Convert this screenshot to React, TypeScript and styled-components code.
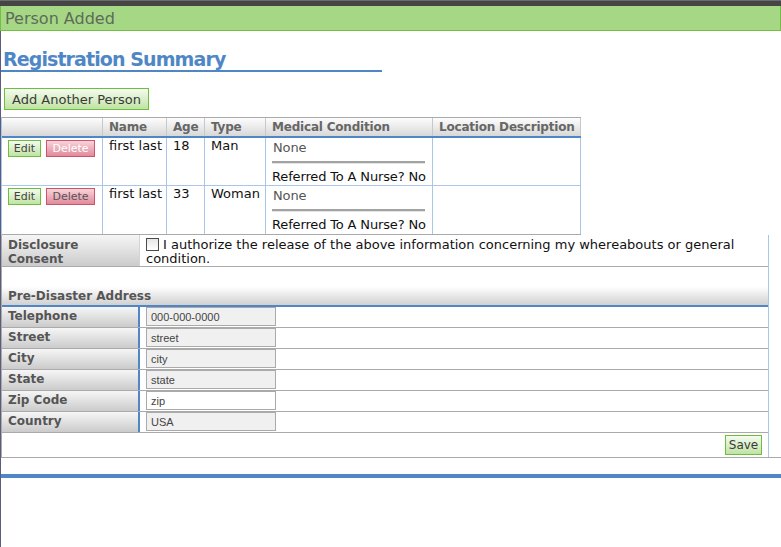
import React from "react";
import styled, { createGlobalStyle, css } from "styled-components";

const GlobalStyle = createGlobalStyle`
  html, body {
    margin: 0;
    padding: 0;
    background: #fff;
    overflow: hidden;
  }
  body {
    font-family: "DejaVu Sans", Verdana, sans-serif;
  }
  * { box-sizing: border-box; }
`;

const blue = "#4f87c6";
const cellBlue = "#a9c5e7";
const gray = "#aaaaaa";

const Page = styled.div`
  display: flex;
  flex-direction: column;
  min-height: 547px;
  width: 100%;
`;

const TopBar = styled.div`
  height: 6px;
  background: linear-gradient(#6b6b6b 0 1px, #454545 1px);
`;

const Banner = styled.div`
  height: 25px;
  padding: 2px 0 0 4px;
  background: #a6d785;
  border: 1px solid #72c043;
  border-top: none;
  color: #5d6b59;
  font-size: 16px;
  line-height: 21px;
`;

const Content = styled.div`
  flex: 1;
  border-left: 1px solid #5c5c7c;
  display: flex;
  flex-direction: column;
  align-items: flex-start;
`;

const Heading = styled.h1`
  margin: 17px 0 0;
  width: 381px;
  padding-left: 2px;
  font-size: 19px;
  letter-spacing: -0.9px;
  line-height: 22px;
  font-weight: bold;
  color: ${blue};
  border-bottom: 2px solid ${blue};
`;

const greenButton = css`
  border: 1px solid #6cbf3c;
  background: linear-gradient(#f5fbf0, #c0e3a2);
  color: #3a3a3a;
  font-family: "DejaVu Sans", Verdana, sans-serif;
  padding: 0;
  cursor: pointer;
`;

const AddButton = styled.button`
  ${greenButton};
  margin: 16px 0 0 3px;
  height: 22px;
  padding: 0 7px;
  font-size: 13px;
`;

const SmallButton = styled.button<{ $kind: "edit" | "delete"; $light?: boolean }>`
  height: 17px;
  font-size: 11px;
  font-family: "DejaVu Sans", Verdana, sans-serif;
  padding: 0;
  ${({ $kind, $light }) =>
    $kind === "edit"
      ? css`
          ${greenButton};
          width: 33px;
          color: #444;
        `
      : css`
          width: 49px;
          margin-left: 5px;
          border: 1px solid #c8566c;
          background: linear-gradient(#f9d3da, #e28a9b);
          color: ${$light ? "#ffffff" : "#555"};
        `}
`;

const PeopleTable = styled.div`
  margin-top: 7px;
  width: 580px;
  border-left: 1px solid ${cellBlue};
`;

const cols = "101px 64px 38px 61px 167px 148px";

const HeadRow = styled.div`
  display: grid;
  grid-template-columns: ${cols};
  border-top: 1px solid ${gray};
  border-bottom: 2px solid ${blue};
`;

const HeadCell = styled.div`
  height: 18px;
  padding: 0 6px;
  border-right: 1px solid #c8c8c8;
  background: linear-gradient(#fdfdfd, #d8d8d8);
  color: #666;
  font-size: 12px;
  letter-spacing: -0.2px;
  font-weight: bold;
  line-height: 19px;
  white-space: nowrap;
`;

const BodyRow = styled.div<{ $last?: boolean }>`
  display: grid;
  grid-template-columns: ${cols};
  height: ${({ $last }) => ($last ? 49 : 48)}px;
  border-bottom: 1px solid ${({ $last }) => ($last ? gray : cellBlue)};
`;

const Cell = styled.div`
  border-right: 1px solid ${cellBlue};
  padding: 0 6px;
  font-size: 13px;
  line-height: 16px;
  color: #111;
  white-space: nowrap;
`;

const ActionCell = styled(Cell)`
  padding: 2px 0 0 6px;
  display: flex;
  align-items: flex-start;
`;

const MedicalCell = styled(Cell)`
  padding: 2px 7px 0 6px;
  letter-spacing: -0.15px;
`;

const Muted = styled.div`
  color: #555;
  padding-left: 1px;
`;

const Rule = styled.hr`
  margin: 5px 0 5px;
  height: 0;
  border: none;
  border-top: 2px solid #a2a2a2;
  border-bottom: 1px solid #e4e4e4;
`;

const FormWrap = styled.div`
  align-self: stretch;
  border-left: 1px solid ${gray};
  border-bottom: 1px solid ${gray};
`;

const Form = styled.div`
  width: 767px;
  border-right: 1px solid ${cellBlue};
`;

const FormRow = styled.div<{ $h: number; $line?: "gray" | "blue" | "none" }>`
  display: grid;
  grid-template-columns: 138px 1fr;
  height: ${({ $h }) => $h}px;
  border-bottom: ${({ $line }) =>
    $line === "blue" ? `2px solid ${blue}` : $line === "none" ? "none" : `1px solid ${gray}`};
`;

const Label = styled.div<{ $accent?: boolean }>`
  padding: ${({ $accent }) => ($accent ? "2px 6px 0" : "3px 6px 0")};
  background: linear-gradient(#f6f6f6, #cbcbcb);
  border-right: ${({ $accent }) => ($accent ? `2px solid ${blue}` : "1px solid #d4d4d4")};
  color: #555;
  font-size: 12px;
  font-weight: bold;
  line-height: 14px;
`;

const ValueCell = styled.div`
  display: flex;
  align-items: flex-start;
  padding: 0 0 0 6px;
`;

const ConsentText = styled.div`
  padding: 3px 6px 0 6px;
  font-size: 13px;
  line-height: 14px;
  color: #111;
`;

const CheckBox = styled.input`
  appearance: none;
  width: 13px;
  height: 13px;
  margin: 0 4px 0 0;
  vertical-align: -2px;
  border: 1px solid #4a4a4a;
  background: linear-gradient(#e6e6e6, #ffffff);
`;

const SectionTitle = styled.div`
  grid-column: 1 / -1;
  display: flex;
  align-items: flex-end;
  padding: 0 6px 2px;
  background: linear-gradient(#fff 0%, #fff 52%, #d0d0d0 100%);
  color: #555;
  font-size: 12px;
  font-weight: bold;
  line-height: 14px;
`;

const TextField = styled.input<{ $enabled?: boolean }>`
  width: 130px;
  height: 19px;
  padding: 0 4px;
  margin: 0;
  border: 1px solid ${gray};
  background: ${({ $enabled }) => ($enabled ? "#fff" : "#f0f0f0")};
  color: #444;
  font-family: "Liberation Sans", Arial, sans-serif;
  font-size: 11px;
  outline: none;
`;

const SaveCell = styled.div`
  grid-column: 1 / -1;
  display: flex;
  justify-content: flex-end;
  padding: 2px 6px 0;
`;

const SaveButton = styled.button`
  ${greenButton};
  width: 37px;
  height: 20px;
  font-size: 12px;
`;

const BlueRule = styled.div`
  align-self: stretch;
  margin-top: 16px;
  height: 4px;
  background: ${blue};
`;

const people = [
  { name: "first last", age: "18", type: "Man" },
  { name: "first last", age: "33", type: "Woman" },
];

const address = [
  { label: "Telephone", value: "000-000-0000" },
  { label: "Street", value: "street" },
  { label: "City", value: "city" },
  { label: "State", value: "state" },
  { label: "Zip Code", value: "zip", enabled: true },
  { label: "Country", value: "USA" },
];

export default function App() {
  return (
    <Page>
      <GlobalStyle />
      <TopBar />
      <Banner>Person Added</Banner>
      <Content>
        <Heading>Registration Summary</Heading>
        <AddButton>Add Another Person</AddButton>
        <PeopleTable>
          <HeadRow>
            <HeadCell />
            <HeadCell>Name</HeadCell>
            <HeadCell>Age</HeadCell>
            <HeadCell>Type</HeadCell>
            <HeadCell>Medical Condition</HeadCell>
            <HeadCell>Location Description</HeadCell>
          </HeadRow>
          {people.map((p, i) => (
            <BodyRow key={i} $last={i === people.length - 1}>
              <ActionCell>
                <SmallButton $kind="edit">Edit</SmallButton>
                <SmallButton $kind="delete" $light={i === 0}>
                  Delete
                </SmallButton>
              </ActionCell>
              <Cell>{p.name}</Cell>
              <Cell>{p.age}</Cell>
              <Cell>{p.type}</Cell>
              <MedicalCell>
                <Muted>None</Muted>
                <Rule />
                <div>Referred To A Nurse? No</div>
              </MedicalCell>
              <Cell />
            </BodyRow>
          ))}
        </PeopleTable>
        <FormWrap>
          <Form>
            <FormRow $h={32}>
              <Label>
                Disclosure
                <br />
                Consent
              </Label>
              <ConsentText>
                <CheckBox type="checkbox" />I authorize the release of the above information
                concerning my whereabouts or general
                <br />
                condition.
              </ConsentText>
            </FormRow>
            <FormRow $h={40} $line="blue">
              <SectionTitle>Pre-Disaster Address</SectionTitle>
            </FormRow>
            {address.map((a) => (
              <FormRow key={a.label} $h={21}>
                <Label $accent>{a.label}</Label>
                <ValueCell>
                  <TextField
                    $enabled={a.enabled}
                    defaultValue={a.value}
                    readOnly={!a.enabled}
                  />
                </ValueCell>
              </FormRow>
            ))}
            <FormRow $h={24} $line="none">
              <SaveCell>
                <SaveButton>Save</SaveButton>
              </SaveCell>
            </FormRow>
          </Form>
        </FormWrap>
        <BlueRule />
      </Content>
    </Page>
  );
}
